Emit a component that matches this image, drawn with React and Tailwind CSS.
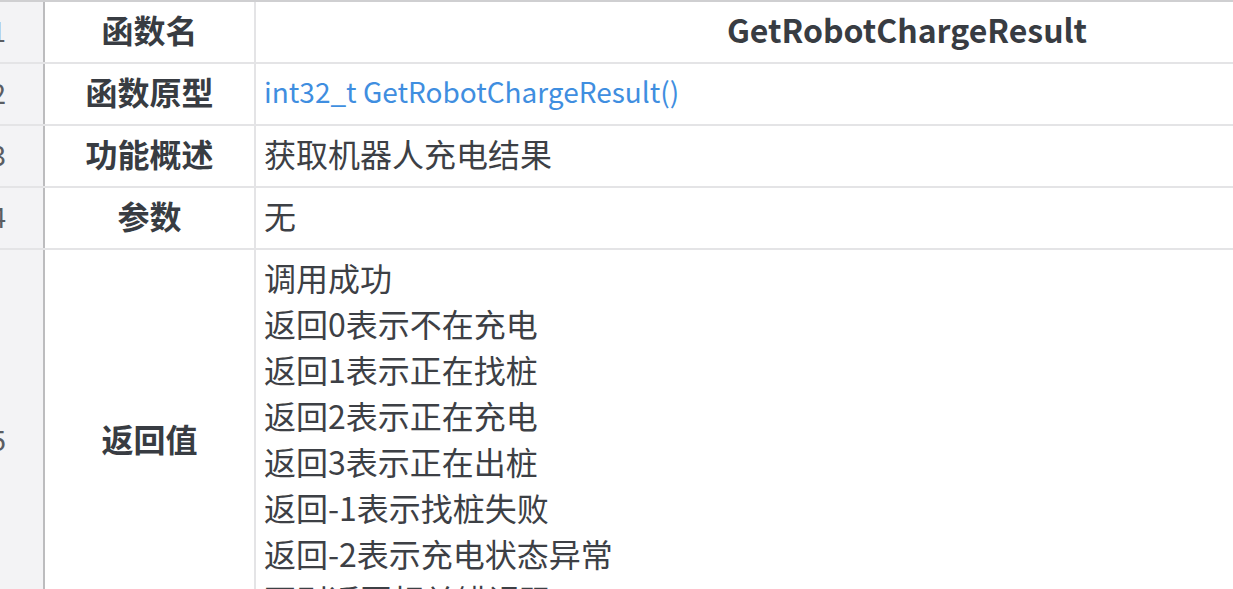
const rows = [
  { n: 1, label: "函数名", value: "GetRobotChargeResult", kind: "head" },
  { n: 2, label: "函数原型", value: "int32_t GetRobotChargeResult()", kind: "code" },
  { n: 3, label: "功能概述", value: "获取机器人充电结果" },
  { n: 4, label: "参数", value: "无" },
  {
    n: 5,
    label: "返回值",
    lines: [
      "调用成功",
      "返回0表示不在充电",
      "返回1表示正在找桩",
      "返回2表示正在充电",
      "返回3表示正在出桩",
      "返回-1表示找桩失败",
      "返回-2表示充电状态异常",
      "否则返回相关错误码",
    ],
  },
];

export default function App() {
  return (
    <div
      className="w-[1233px] h-[589px] overflow-hidden bg-white text-[#3d4045]"
      style={{ fontFamily: '"Noto Sans CJK SC", "Noto Sans", sans-serif' }}
    >
      <div className="w-[1560px] border-t-2 border-[#cfcfd1]">
        {rows.map((row) => (
          <div key={row.n} className="flex border-b-2 border-[#e4e4e6]">
            <div className="w-[45px] shrink-0 bg-[#f3f3f5] border-r-2 border-[#bcbcbe] flex items-center justify-end pr-[37px] pb-[4px] overflow-hidden text-[28px] text-[#5a5d62]">
              <span>{row.n}</span>
            </div>
            <div className="w-[211px] shrink-0 border-r-2 border-[#e4e4e6] flex items-center justify-center pb-[6px] text-[32px] font-bold text-[#383c42] leading-[46px]">
              {row.label}
            </div>
            <div className="flex-1 pl-[8px] pt-[4px] pb-[10px] text-[32px] leading-[46px]">
              {row.kind === "head" && (
                <div className="text-center font-bold text-[#383c42] pr-[10px]">{row.value}</div>
              )}
              {row.kind === "code" && <div className="text-[#3f8ee0] text-[28px]">{row.value}</div>}
              {!row.kind && row.value && <div>{row.value}</div>}
              {row.lines && row.lines.map((l) => <div key={l}>{l}</div>)}
            </div>
          </div>
        ))}
      </div>
    </div>
  );
}
